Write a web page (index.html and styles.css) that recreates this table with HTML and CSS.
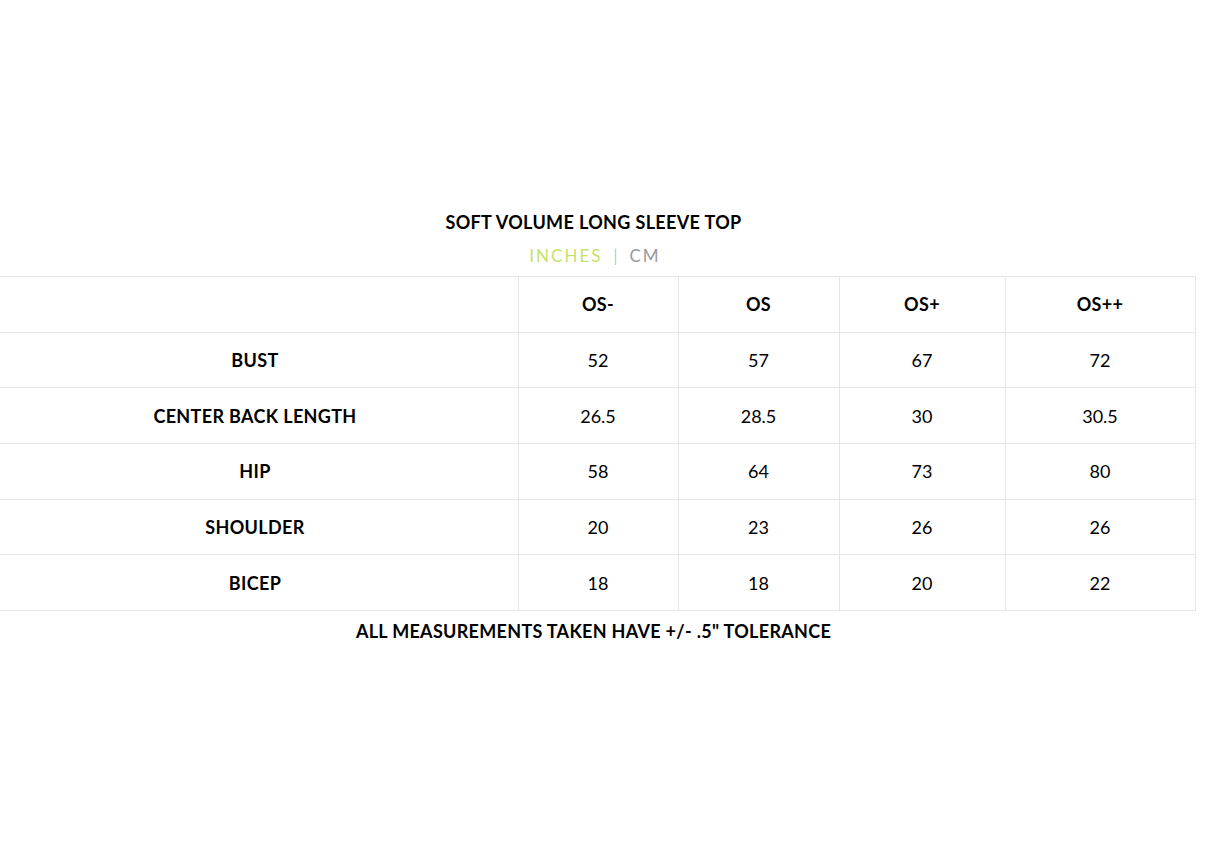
FILE: index.html
```html
<!DOCTYPE html>
<html>
<head>
<meta charset="utf-8">
<link rel="stylesheet" href="styles.css">
</head>
<body>
<div class="chart">
  <h1 class="title">SOFT VOLUME LONG SLEEVE TOP</h1>
  <div class="units"><span class="unit active">INCHES</span><span class="sep">|</span><span class="unit">CM</span></div>
  <table class="sizes">
    <colgroup>
      <col class="c1"><col class="c2"><col class="c3"><col class="c4"><col class="c5">
    </colgroup>
    <tr><th></th><th>OS-</th><th>OS</th><th>OS+</th><th>OS++</th></tr>
    <tr><th>BUST</th><td>52</td><td>57</td><td>67</td><td>72</td></tr>
    <tr><th>CENTER BACK LENGTH</th><td>26.5</td><td>28.5</td><td>30</td><td>30.5</td></tr>
    <tr><th>HIP</th><td>58</td><td>64</td><td>73</td><td>80</td></tr>
    <tr><th>SHOULDER</th><td>20</td><td>23</td><td>26</td><td>26</td></tr>
    <tr><th>BICEP</th><td>18</td><td>18</td><td>20</td><td>22</td></tr>
  </table>
  <p class="note">ALL MEASUREMENTS TAKEN HAVE +/- .5" TOLERANCE</p>
</div>
</body>
</html>
```
FILE: styles.css
```css
html, body {
  margin: 0;
  padding: 0;
  background: #fff;
}
body {
  font-family: Lato, "Noto Sans", sans-serif;
  color: #000;
}
.chart {
  width: 1203px;
  margin-left: -8px;
  padding-top: 210px;
  display: flex;
  flex-direction: column;
  align-items: center;
}
.title {
  margin: 0;
  font-size: 18px;
  font-weight: 700;
  line-height: 24px;
  letter-spacing: 0.35px;
}
.units {
  margin-top: 10px;
  height: 22px;
  display: flex;
  align-items: center;
  font-size: 17px;
  color: #999;
}
.unit {
  letter-spacing: 2px;
}
.unit.active {
  color: #c4e36a;
  margin-left: 3px;
}
.sep {
  margin: 0 12px 0 11px;
  color: #999;
  font-size: 17px;
  font-weight: 300;
}
.sizes {
  margin-top: 10px;
  width: 1203px;
  border-collapse: collapse;
  table-layout: fixed;
}
.c1 { width: 526px; }
.c2 { width: 160px; }
.c3 { width: 161px; }
.c4 { width: 166px; }
.c5 { width: 190px; }
.sizes th, .sizes td {
  border: 1px solid #e6e6e6;
  height: 54.7px;
  padding: 0;
  text-align: center;
  font-size: 18px;
}
.sizes th {
  font-weight: 700;
  letter-spacing: 0.35px;
}
.sizes td {
  font-weight: 400;
}
.note {
  margin: 8px 0 0;
  font-size: 18px;
  font-weight: 700;
  line-height: 24px;
  letter-spacing: 0.3px;
}
```
